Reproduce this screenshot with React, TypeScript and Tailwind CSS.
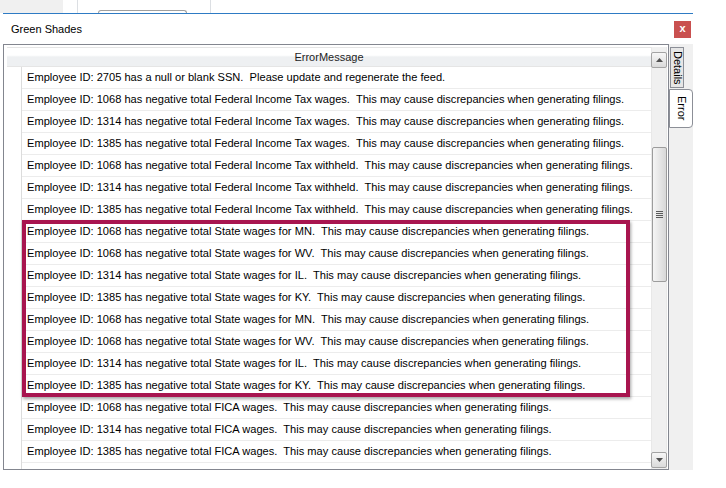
import React from 'react';

const rows: string[] = [
  "Employee ID: 2705 has a null or blank SSN.  Please update and regenerate the feed.",
  "Employee ID: 1068 has negative total Federal Income Tax wages.  This may cause discrepancies when generating filings.",
  "Employee ID: 1314 has negative total Federal Income Tax wages.  This may cause discrepancies when generating filings.",
  "Employee ID: 1385 has negative total Federal Income Tax wages.  This may cause discrepancies when generating filings.",
  "Employee ID: 1068 has negative total Federal Income Tax withheld.  This may cause discrepancies when generating filings.",
  "Employee ID: 1314 has negative total Federal Income Tax withheld.  This may cause discrepancies when generating filings.",
  "Employee ID: 1385 has negative total Federal Income Tax withheld.  This may cause discrepancies when generating filings.",
  "Employee ID: 1068 has negative total State wages for MN.  This may cause discrepancies when generating filings.",
  "Employee ID: 1068 has negative total State wages for WV.  This may cause discrepancies when generating filings.",
  "Employee ID: 1314 has negative total State wages for IL.  This may cause discrepancies when generating filings.",
  "Employee ID: 1385 has negative total State wages for KY.  This may cause discrepancies when generating filings.",
  "Employee ID: 1068 has negative total State wages for MN.  This may cause discrepancies when generating filings.",
  "Employee ID: 1068 has negative total State wages for WV.  This may cause discrepancies when generating filings.",
  "Employee ID: 1314 has negative total State wages for IL.  This may cause discrepancies when generating filings.",
  "Employee ID: 1385 has negative total State wages for KY.  This may cause discrepancies when generating filings.",
  "Employee ID: 1068 has negative total FICA wages.  This may cause discrepancies when generating filings.",
  "Employee ID: 1314 has negative total FICA wages.  This may cause discrepancies when generating filings.",
  "Employee ID: 1385 has negative total FICA wages.  This may cause discrepancies when generating filings.",
  "",
];

function ScrollButton({ up }: { up: boolean }) {
  return (
    <div className="w-[16px] h-[16px] border border-[#a3a3a3] rounded-[2px] bg-gradient-to-b from-[#f7f7f7] to-[#dadada] flex items-center justify-center">
      <svg width="7" height="4" viewBox="0 0 7 4">
        {up ? <path d="M0 4 L3.5 0 L7 4 Z" fill="#505050" /> : <path d="M0 0 L7 0 L3.5 4 Z" fill="#505050" />}
      </svg>
    </div>
  );
}

export default function App() {
  return (
    <div
      className="w-[726px] h-[488px] bg-white relative overflow-hidden text-black"
      style={{ fontFamily: '"Liberation Sans", Arial, sans-serif' }}
    >
      {/* background window strip */}
      <div className="flex h-[13px]">
        <div className="w-[63px] bg-[#f0f0f0]" />
        <div className="w-[14px]" />
        <div className="w-px bg-[#dcdfe3]" />
        <div className="w-[20px]" />
        <div className="w-[89px] mt-[10px] border-t border-x border-[#a0a0a0] rounded-t-[3px]" />
        <div className="w-[23px]" />
        <div className="w-px bg-[#dcdfe3]" />
      </div>

      {/* dialog */}
      <div className="ml-[3px] w-[690px] border-t border-[#2e7bc4]">
        <div className="h-[30px] flex items-center justify-between pl-[8px] pr-[2px]">
          <span className="text-[11px]">Green Shades</span>
          <div className="w-[17px] h-[17px] bg-[#c9504f] text-white text-[11px] font-bold flex items-center justify-center leading-none pb-[2px]">
            x
          </div>
        </div>

        <div className="flex h-[426px]">
          {/* grid */}
          <div className="w-[666px] border border-[#83868f] flex pt-[2px] pl-[3px] pr-[1px]">
            <div className="flex-1 min-w-0 flex flex-col overflow-hidden">
              <div className="h-[20px] shrink-0 border-t border-[#e5e5e5] bg-gradient-to-b from-white from-40% to-[#eef0f2] to-50% border-b border-[#d5d5d5] flex items-center justify-center text-[11px] text-[#1e1e1e]">
                ErrorMessage
              </div>
              <div className="flex-1 flex overflow-hidden">
                <div className="w-[15px] shrink-0 border-r border-[#dcdcdc]" />
                <div className="flex-1 min-w-0 flex flex-col overflow-hidden">
                  {rows.map((r, i) => (
                    <div
                      key={i}
                      className="h-[22px] shrink-0 border-b border-[#ececec] flex items-center pl-[5px] text-[11.1px] whitespace-pre"
                    >
                      {r}
                    </div>
                  ))}
                </div>
              </div>
            </div>

            {/* scrollbar */}
            <div className="w-[16px] shrink-0 bg-[#f0f0f0] border-x border-[#e8e8e8] flex flex-col items-center pt-[5px] pb-[1px]">
              <ScrollButton up />
              <div className="h-[79px]" />
              <div className="w-[15px] h-[135px] border border-[#9c9c9c] rounded-[2px] bg-gradient-to-r from-[#f5f5f5] to-[#d8d8d8] flex flex-col items-center justify-center gap-[1px]">
                <div className="w-[7px] h-px bg-[#5a5a5a]" />
                <div className="w-[7px] h-px bg-[#5a5a5a]" />
                <div className="w-[7px] h-px bg-[#5a5a5a]" />
                <div className="w-[7px] h-px bg-[#5a5a5a]" />
              </div>
              <div className="flex-1" />
              <ScrollButton up={false} />
            </div>
          </div>

          {/* side tabs */}
          <div className="w-[24px] bg-[#f0f0f0] flex flex-col pt-[3px]">
            <div className="ml-[1px] w-[14px] h-[41px] bg-[#e6e6e6] border border-[#8c8f97] flex items-center justify-center">
              <span className="text-[11px] leading-none [writing-mode:vertical-rl]">Details</span>
            </div>
            <div className="mt-[1px] w-[24px] h-[39px] bg-white border border-[#8c8f97] rounded-r-[4px] flex items-center justify-center">
              <span className="text-[11px] leading-none [writing-mode:vertical-rl]">Error</span>
            </div>
          </div>
        </div>
      </div>

      {/* highlight */}
      <div className="absolute left-[22px] top-[220px] w-[608px] h-[177px] border-[4px] border-[#a8154f] shadow-[1px_2px_3px_rgba(0,0,0,0.35)]" />
    </div>
  );
}
